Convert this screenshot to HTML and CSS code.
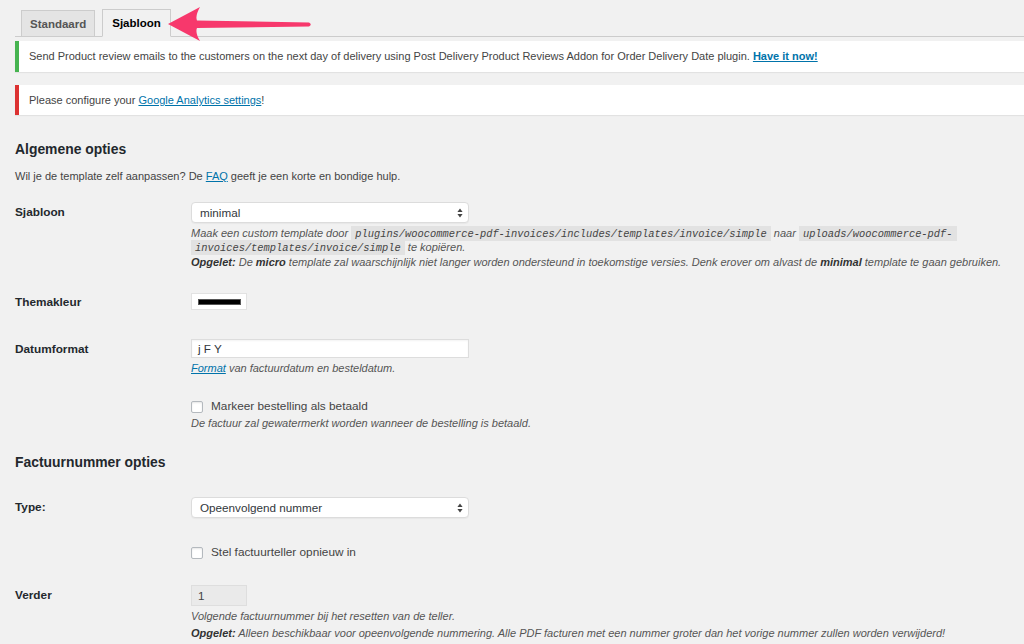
FILE: index.html
```html
<!DOCTYPE html>
<html lang="nl">
<head>
<meta charset="utf-8">
<title>Sjabloon instellingen</title>
<link rel="stylesheet" href="styles.css">
</head>
<body>
<div class="wrap">
  <nav class="tabs">
    <a class="tab">Standaard</a>
    <a class="tab active">Sjabloon</a>
  </nav>

  <div class="notice success">
    <p>Send Product review emails to the customers on the next day of delivery using Post Delivery Product Reviews Addon for Order Delivery Date plugin. <a class="link strong">Have it now!</a></p>
  </div>
  <div class="notice error">
    <p>Please configure your <a class="link">Google Analytics settings</a>!</p>
  </div>

  <h2 class="section-title first">Algemene opties</h2>
  <p class="intro">Wil je de template zelf aanpassen? De <a class="link">FAQ</a> geeft je een korte en bondige hulp.</p>

  <div class="form-table">
    <div class="row">
      <div class="th">Sjabloon</div>
      <div class="td">
        <div class="select"><span>minimal</span><svg class="updown" viewBox="0 0 6 10" width="6" height="10"><path d="M3 0.5 L5.6 4 L0.4 4 Z M3 9.5 L5.6 6 L0.4 6 Z" fill="#444"/></svg></div>
        <p class="description">Maak een custom template door <code>plugins/woocommerce-pdf-invoices/includes/templates/invoice/simple</code> naar <code>uploads/woocommerce-pdf-</code><br><code>invoices/templates/invoice/simple</code> te kopiëren.</p>
        <p class="description tight"><strong>Opgelet:</strong> De <strong>micro</strong> template zal waarschijnlijk niet langer worden ondersteund in toekomstige versies. Denk erover om alvast de <strong>minimal</strong> template te gaan gebruiken.</p>
      </div>
    </div>

    <div class="row">
      <div class="th th-swatch">Themakleur</div>
      <div class="td">
        <div class="swatch"><span class="swatch-color"></span></div>
      </div>
    </div>

    <div class="row">
      <div class="th">Datumformat</div>
      <div class="td">
        <div class="input wide">j F Y</div>
        <p class="description"><a class="link">Format</a> van factuurdatum en besteldatum.</p>
      </div>
    </div>

    <div class="row">
      <div class="th"></div>
      <div class="td">
        <label class="check"><span class="box"></span>Markeer bestelling als betaald</label>
        <p class="description">De factuur zal gewatermerkt worden wanneer de bestelling is betaald.</p>
      </div>
    </div>
  </div>

  <h2 class="section-title">Factuurnummer opties</h2>

  <div class="form-table second">
    <div class="row">
      <div class="th">Type:</div>
      <div class="td">
        <div class="select"><span>Opeenvolgend nummer</span><svg class="updown" viewBox="0 0 6 10" width="6" height="10"><path d="M3 0.5 L5.6 4 L0.4 4 Z M3 9.5 L5.6 6 L0.4 6 Z" fill="#444"/></svg></div>
      </div>
    </div>

    <div class="row">
      <div class="th empty"></div>
      <div class="td td-check">
        <label class="check"><span class="box"></span>Stel factuurteller opnieuw in</label>
      </div>
    </div>

    <div class="row">
      <div class="th">Verder</div>
      <div class="td">
        <div class="input small disabled">1</div>
        <p class="description">Volgende factuurnummer bij het resetten van de teller.</p>
        <p class="description"><strong>Opgelet:</strong> Alleen beschikbaar voor opeenvolgende nummering. Alle PDF facturen met een nummer groter dan het vorige nummer zullen worden verwijderd!</p>
      </div>
    </div>
  </div>
</div>

<svg class="arrow" viewBox="0 0 160 50" width="160" height="50" aria-hidden="true">
  <path d="M2 17 L34 0 Q29 9 31 13.5 L143 15.5 Q146.5 17.5 143 19.5 L31 21 Q29 25.5 34 34 Z" fill="#f7386c"/>
</svg>
</body>
</html>
```

FILE: styles.css
```css
html, body {
  margin: 0;
  padding: 0;
  background: #f1f1f1;
}

body {
  font-family: "Liberation Sans", Arial, sans-serif;
  font-size: 11px;
  color: #444;
  width: 1024px;
  height: 644px;
  overflow: hidden;
  position: relative;
}

.wrap {
  padding: 9px 0 0 15px;
}

/* Tabs */
.tabs {
  display: flex;
  align-items: flex-end;
  gap: 7px;
  padding-left: 6px;
  border-bottom: 1px solid #ccc;
  height: 27px;
}

.tab {
  display: block;
  box-sizing: border-box;
  height: 26px;
  padding: 0 8px;
  line-height: 26px;
  font-size: 11.5px;
  font-weight: bold;
  color: #555;
  background: #e4e4e4;
  border: 1px solid #ccc;
  border-bottom: none;
}

.tab.active {
  color: #000;
  background: #f1f1f1;
  height: 28px;
  line-height: 27px;
  margin-bottom: -1px;
  padding: 0 9px;
  border-bottom: 1px solid #f1f1f1;
}

/* Notices */
.notice {
  background: #fff;
  border-left: 4px solid #46b450;
  box-shadow: 0 1px 1px rgba(0, 0, 0, 0.06);
  padding: 8px 10px;
  margin-top: 4px;
}

.notice.error {
  border-left-color: #dc3232;
  margin-top: 13px;
  padding-bottom: 7px;
}

.notice p {
  margin: 0;
  line-height: 15px;
  font-size: 11px;
  color: #444;
}

.link {
  color: #0073aa;
  text-decoration: underline;
}

.link.strong {
  font-weight: bold;
}

/* Headings */
.section-title {
  font-size: 13.9px;
  font-weight: bold;
  color: #23282d;
  line-height: 17px;
  margin: 12px 0 0;
}

.section-title.first {
  margin-top: 26px;
}

.intro {
  margin: 11px 0 0;
  line-height: 15px;
}

/* Form table */
.form-table {
  margin-top: 6px;
}

.form-table.second {
  margin-top: 14px;
}

.row {
  display: grid;
  grid-template-columns: 176px 1fr;
}

.th {
  padding: 15px 0 16px;
  font-size: 11.8px;
  font-weight: bold;
  color: #23282d;
  line-height: 15px;
}

.th.th-swatch {
  padding-top: 14px;
  padding-bottom: 17px;
}

.th.empty {
  padding: 0;
}

.td {
  padding: 12px 0;
  min-width: 0;
}

.td.td-check {
  padding: 14px 0 13px;
}

/* Controls */
.select {
  box-sizing: border-box;
  width: 278px;
  height: 21px;
  display: flex;
  align-items: center;
  justify-content: space-between;
  padding: 0 5px 0 8px;
  background: #fff;
  border: 1px solid #dcdcdc;
  border-radius: 4px;
  box-shadow: 0 1px 1px rgba(0, 0, 0, 0.04);
  color: #32373c;
  font-size: 11.7px;
}

.updown {
  display: block;
}

.input {
  box-sizing: border-box;
  height: 20px;
  padding: 0 6px;
  line-height: 18px;
  background: #fff;
  border: 1px solid #ddd;
  box-shadow: inset 0 1px 2px rgba(0, 0, 0, 0.05);
  color: #32373c;
  font-size: 11.7px;
}

.input.wide {
  width: 278px;
  height: 19px;
  line-height: 17px;
}

.input.small {
  width: 56px;
  height: 21px;
  line-height: 19px;
}

.input.disabled {
  background: #eaeaea;
  border-color: #dedede;
  box-shadow: none;
  color: #444;
}

.swatch {
  box-sizing: border-box;
  width: 56px;
  height: 17px;
  background: #fff;
  border: 1px solid #e2e2e2;
  display: flex;
  align-items: center;
  justify-content: center;
}

.swatch-color {
  display: block;
  width: 43px;
  height: 6px;
  background: #000;
  border: 1px solid #555;
  box-sizing: border-box;
}

.description {
  margin: 3px 0 0;
  font-style: italic;
  line-height: 14px;
  color: #555;
  font-size: 11px;
  white-space: nowrap;
}

.description.tight {
  margin-top: 1px;
}

.description strong {
  color: #333;
}

code {
  font-family: "Liberation Mono", "DejaVu Sans Mono", monospace;
  font-style: italic;
  font-size: 10.4px;
  line-height: 1;
  background: #e2e2e2;
  padding: 2px 4px 1px;
  color: #444;
}

.check {
  display: flex;
  align-items: center;
  gap: 8px;
  line-height: 15px;
  font-size: 11.8px;
  color: #444;
}

.box {
  display: block;
  box-sizing: border-box;
  width: 12px;
  height: 12px;
  background: #fff;
  border: 1px solid #b4b9be;
  border-radius: 2px;
  box-shadow: inset 0 1px 2px rgba(0, 0, 0, 0.1);
}

.check + .description {
  margin-top: 2px;
}

/* Annotation arrow overlay */
.arrow {
  position: absolute;
  left: 166px;
  top: 7px;
}
```
